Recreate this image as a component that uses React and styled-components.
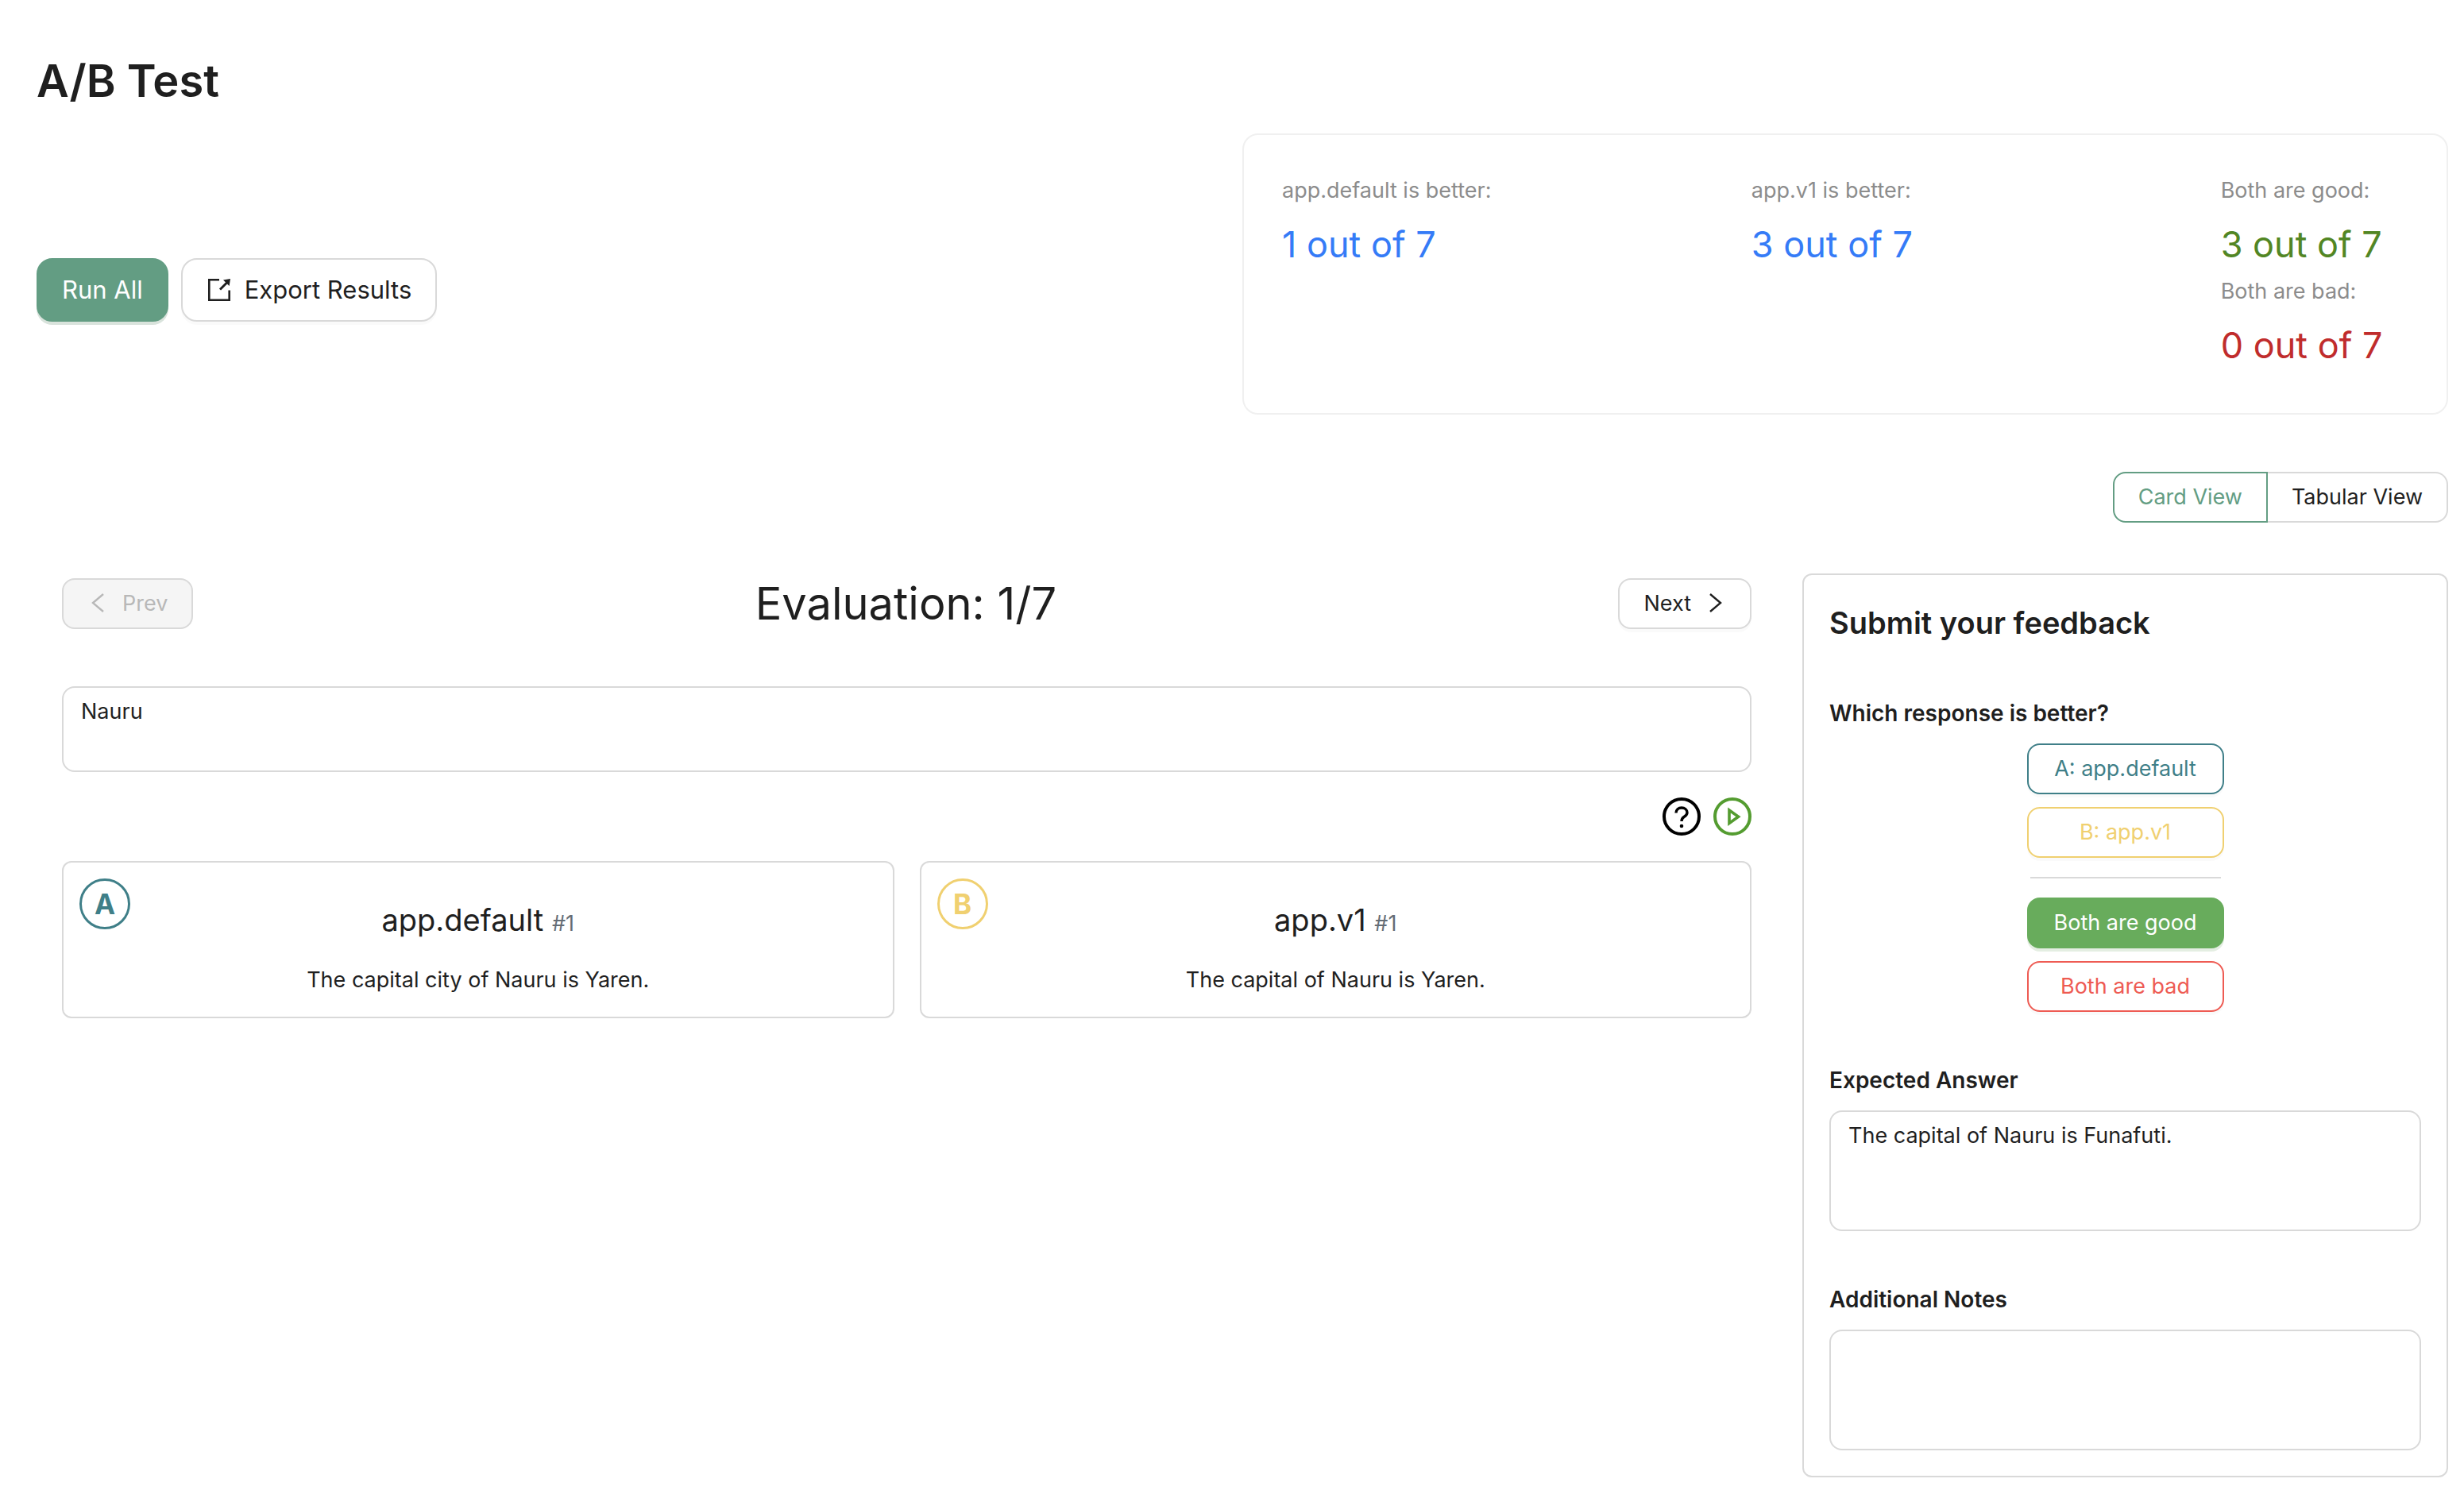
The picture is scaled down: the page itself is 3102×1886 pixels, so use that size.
import React from "react";
import styled, { createGlobalStyle } from "styled-components";

const Global = createGlobalStyle`
  *, *::before, *::after { box-sizing: border-box; }
  body {
    margin: 0;
    background: #fff;
    color: #1f1f1f;
    font-family: Inter, "Liberation Sans", sans-serif;
    font-size: 27px;
    line-height: 44px;
  }
  button, textarea { font-family: inherit; font-size: inherit; line-height: inherit; color: inherit; margin: 0; }
`;

const Page = styled.main`padding: 64px 20px 24px 46px;`;

const PageTitle = styled.h1`
  margin: 0 0 28px;
  font-size: 56px;
  font-weight: 600;
  line-height: 76px;
`;

const TopRow = styled.section`
  display: grid;
  grid-template-columns: 1fr 1fr;
  align-items: center;
`;

const Actions = styled.div`
  display: flex;
  gap: 16px;
  padding-top: 40px;
`;

const tones = {
  plain: ["#fff", "#d9d9d9", "#1f1f1f", "rgba(0,0,0,0.02)"],
  primary: ["#639d83", "#639d83", "#fff", "#d9e3dc"],
  active: ["#fff", "#639d83", "#639d83", "transparent"],
  teal: ["#fff", "#3f7f88", "#3f7f88", "rgba(0,0,0,0.02)"],
  yellow: ["#fff", "#f0d070", "#f0d070", "rgba(0,0,0,0.02)"],
  green: ["#68ac5c", "#68ac5c", "#fff", "#e4eee2"],
  red: ["#fff", "#ee5b53", "#ee5b53", "rgba(0,0,0,0.02)"],
};

const Button = styled.button`
  display: inline-flex;
  align-items: center;
  justify-content: center;
  gap: 16px;
  height: ${(p) => (p.$large ? 80 : 64)}px;
  padding: 0 30px;
  border: 2px solid ${(p) => tones[p.$tone ?? "plain"][1]};
  border-radius: ${(p) => (p.$large ? 20 : 16)}px;
  background: ${(p) => tones[p.$tone ?? "plain"][0]};
  color: ${(p) => tones[p.$tone ?? "plain"][2]};
  box-shadow: 0 4px 0 ${(p) => tones[p.$tone ?? "plain"][3]};
  font-size: ${(p) => (p.$large ? 31 : 27)}px;
  white-space: nowrap;
  &:disabled {
    border-color: #d9d9d9;
    background: #f5f5f5;
    color: #b8b8b8;
    box-shadow: none;
  }
`;

const StatsCard = styled.div`
  display: grid;
  grid-template-columns: 10fr 10fr 4fr;
  padding: 48px;
  border: 2px solid #f0f0f0;
  border-radius: 20px;
`;

const Stat = styled.div`white-space: nowrap;`;
const StatLabel = styled.div`margin-bottom: 8px; color: #8c8c8c;`;
const StatValue = styled.div`
  font-size: 45px;
  line-height: 75px;
  color: ${(p) => p.$color};
`;

const ViewSwitch = styled.div`
  display: flex;
  justify-content: flex-end;
  margin: 72px 0 64px;
  & > button { box-shadow: none; }
  & > button:first-child { border-radius: 16px 0 0 16px; }
  & > button:last-child { border-left: 0; border-radius: 0 16px 16px 0; }
`;

const Body = styled.section`
  display: grid;
  grid-template-columns: 2191fr 845fr;
  align-items: start;
`;

const Evaluation = styled.div`padding: 0 32px;`;

const NavRow = styled.div`
  display: flex;
  align-items: center;
  justify-content: space-between;
  margin-bottom: 66px;
`;

const NavTitle = styled.h2`
  margin: 0;
  font-size: 56px;
  font-weight: 400;
  line-height: 76px;
`;

const TextBox = styled.textarea`
  display: block;
  width: 100%;
  height: ${(p) => p.$height}px;
  padding: 8px 22px;
  border: 2px solid #d9d9d9;
  border-radius: 16px;
  background: #fff;
  resize: none;
  outline: none;
`;

const IconRow = styled.div`
  display: flex;
  justify-content: flex-end;
  gap: 16px;
  margin: 32px 0;
`;

const IconButton = styled.button`
  display: flex;
  padding: 0;
  border: 0;
  background: none;
`;

const Variants = styled.div`
  display: grid;
  grid-template-columns: 1fr 1fr;
  gap: 32px;
`;

const VariantCard = styled.article`
  position: relative;
  padding: 40px 20px 24px;
  border: 2px solid #d9d9d9;
  border-radius: 12px;
  text-align: center;
`;

const Badge = styled.span`
  position: absolute;
  top: 20px;
  left: 20px;
  display: flex;
  align-items: center;
  justify-content: center;
  width: 64px;
  height: 64px;
  border: 3px solid ${(p) => p.$color};
  border-radius: 50%;
  color: ${(p) => p.$color};
  font-size: 35px;
  font-weight: 700;
`;

const VariantName = styled.h3`
  margin: 0 0 22px;
  font-size: 38px;
  font-weight: 400;
  line-height: 64px;
`;

const Revision = styled.span`color: #656d76; font-size: 27px; line-height: 1;`;
const Answer = styled.p`margin: 0;`;

const Feedback = styled.aside`
  display: flex;
  flex-direction: column;
  margin-left: 32px;
  padding: 32px;
  border: 2px solid #d9d9d9;
  border-radius: 12px;
`;

const FeedbackTitle = styled.h2`
  margin: 0 0 64px;
  font-size: 38px;
  font-weight: 600;
  line-height: 56px;
`;

const FieldTitle = styled.label`
  margin: 0 0 16px;
  font-size: 28px;
  font-weight: 600;
`;

const Choices = styled.div`
  display: flex;
  flex-direction: column;
  align-self: center;
  gap: 16px;
  min-width: 248px;
  margin-bottom: 64px;
`;

const Divider = styled.hr`
  width: 240px;
  margin: 8px auto;
  border: 0;
  border-top: 2px solid #d9d9d9;
`;

const Field = styled.div`
  display: flex;
  flex-direction: column;
  & + & { margin-top: 64px; }
`;

const ExportIcon = () => (
  <svg width="32" height="32" viewBox="0 0 32 32" fill="none" stroke="currentColor" strokeWidth="2.6">
    <path d="M16 3.300H3.300V28.700H28.700V16.500" />
    <path d="M17 15.500L27 5.500" strokeWidth="3" />
    <path d="M21 3.400L30 2L28.600 11Z" fill="currentColor" stroke="none" />
  </svg>
);

const Chevron = ({ points }) => (
  <svg width="28" height="28" viewBox="0 0 28 28" fill="none" stroke="currentColor" strokeWidth="2.4">
    <polyline points={points} />
  </svg>
);

const HelpIcon = () => (
  <svg width="48" height="48" viewBox="0 0 48 48" fill="none" stroke="#000" strokeWidth="4">
    <circle cx="24" cy="24" r="22" />
    <path d="M17 19.500C17 15.500 20 13 24 13C28 13 31 15.500 31 19C31 22 29 23.300 27 24.500C25 25.700 24 27 24 30" strokeWidth="3.400" />
    <circle cx="24" cy="36" r="2.300" fill="#000" stroke="none" />
  </svg>
);

const PlayIcon = () => (
  <svg width="48" height="48" viewBox="0 0 48 48" fill="none" stroke="#549c30" strokeWidth="4">
    <circle cx="24" cy="24" r="22" />
    <path d="M20 16V32.500L31.500 24.200Z" strokeWidth="3.600" />
  </svg>
);

export default function App() {
  return (
    <Page>
      <Global />
      <PageTitle>A/B Test</PageTitle>
      <TopRow>
        <Actions>
          <Button $large $tone="primary">Run All</Button>
          <Button $large><ExportIcon />Export Results</Button>
        </Actions>
        <StatsCard>
          <Stat>
            <StatLabel>app.default is better:</StatLabel>
            <StatValue $color="#357bf7">1 out of 7</StatValue>
          </Stat>
          <Stat>
            <StatLabel>app.v1 is better:</StatLabel>
            <StatValue $color="#357bf7">3 out of 7</StatValue>
          </Stat>
          <Stat>
            <StatLabel>Both are good:</StatLabel>
            <StatValue $color="#528624">3 out of 7</StatValue>
            <StatLabel>Both are bad:</StatLabel>
            <StatValue $color="#c02c2c">0 out of 7</StatValue>
          </Stat>
        </StatsCard>
      </TopRow>
      <ViewSwitch>
        <Button $tone="active">Card View</Button>
        <Button>Tabular View</Button>
      </ViewSwitch>
      <Body>
        <Evaluation>
          <NavRow>
            <Button disabled><Chevron points="20,2 7,13 20,24" />Prev</Button>
            <NavTitle>Evaluation: 1/7</NavTitle>
            <Button>Next<Chevron points="8,2 21,13 8,24" /></Button>
          </NavRow>
          <TextBox $height={108} aria-label="Country" defaultValue="Nauru" />
          <IconRow>
            <IconButton aria-label="Help"><HelpIcon /></IconButton>
            <IconButton aria-label="Run"><PlayIcon /></IconButton>
          </IconRow>
          <Variants>
            <VariantCard>
              <Badge $color="#3f7f88">A</Badge>
              <VariantName>app.default <Revision>#1</Revision></VariantName>
              <Answer>The capital city of Nauru is Yaren.</Answer>
            </VariantCard>
            <VariantCard>
              <Badge $color="#f0d070">B</Badge>
              <VariantName>app.v1 <Revision>#1</Revision></VariantName>
              <Answer>The capital of Nauru is Yaren.</Answer>
            </VariantCard>
          </Variants>
        </Evaluation>
        <Feedback>
          <FeedbackTitle>Submit your feedback</FeedbackTitle>
          <FieldTitle as="h3">Which response is better?</FieldTitle>
          <Choices>
            <Button $tone="teal">A: app.default</Button>
            <Button $tone="yellow">B: app.v1</Button>
            <Divider />
            <Button $tone="green">Both are good</Button>
            <Button $tone="red">Both are bad</Button>
          </Choices>
          <Field>
            <FieldTitle htmlFor="expected">Expected Answer</FieldTitle>
            <TextBox id="expected" $height={152} defaultValue="The capital of Nauru is Funafuti." />
          </Field>
          <Field>
            <FieldTitle htmlFor="notes">Additional Notes</FieldTitle>
            <TextBox id="notes" $height={152} />
          </Field>
        </Feedback>
      </Body>
    </Page>
  );
}
